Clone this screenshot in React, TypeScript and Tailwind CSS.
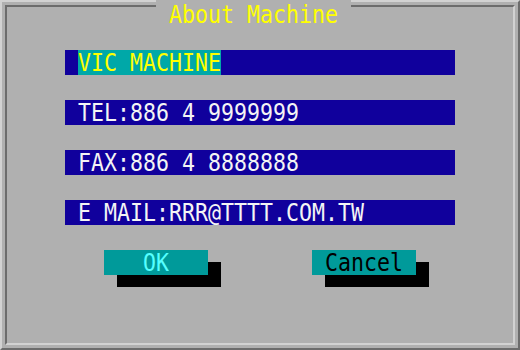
import React from "react";

const rows = ["TEL:886 4 9999999", "FAX:886 4 8888888", "E MAIL:RRR@TTTT.COM.TW"];

function Tall({ children, className = "" }: { children: React.ReactNode; className?: string }) {
  return <span className={`inline-block scale-y-[1.18] whitespace-pre ${className}`}>{children}</span>;
}

function Bar({ children }: { children: React.ReactNode }) {
  return (
    <div className="flex h-[25px] w-[390px] items-center bg-[#10009c] pl-[13px] text-[#f4f4f4]">
      {children}
    </div>
  );
}

function DosButton({ label, text }: { label: string; text: string }) {
  return (
    <div
      className={`flex h-[25px] w-[104px] items-center justify-center bg-[#009a9a] shadow-[13px_12px_0_#000] ${text}`}
    >
      <Tall>{label}</Tall>
    </div>
  );
}

export default function App() {
  return (
    <div className="relative h-[350px] w-[520px] border-2 border-t-[#d2d2d2] border-l-[#d2d2d2] border-r-[#6c6c6c] border-b-[#6c6c6c] bg-[#b0b0b0] p-[3px] font-['DejaVu_Sans_Mono',monospace] text-[21.6px] leading-none">
      <div className="h-full border-2 border-t-[#6c6c6c] border-l-[#6c6c6c] border-r-[#d2d2d2] border-b-[#d2d2d2]">
        <div className="flex flex-col gap-[25px] pl-[58px] pt-[43px]">
          <div className="flex h-[25px] w-[390px] items-stretch bg-[#10009c] pl-[13px]">
            <div className="flex items-center bg-[#00a8a8] text-[#ffff00]">
              <Tall>VIC MACHINE</Tall>
            </div>
          </div>
          {rows.map((r) => (
            <Bar key={r}>
              <Tall>{r}</Tall>
            </Bar>
          ))}
        </div>
        <div className="mt-[25px] flex gap-[104px] pl-[97px]">
          <DosButton label="OK" text="text-[#55ffff]" />
          <DosButton label="Cancel" text="text-black" />
        </div>
      </div>
      <div className="absolute left-[154px] top-[-2px] flex h-[28px] w-[195px] items-center justify-center bg-[#b0b0b0] pt-[2px] text-[#ffff00]">
        <Tall>About Machine</Tall>
      </div>
    </div>
  );
}
